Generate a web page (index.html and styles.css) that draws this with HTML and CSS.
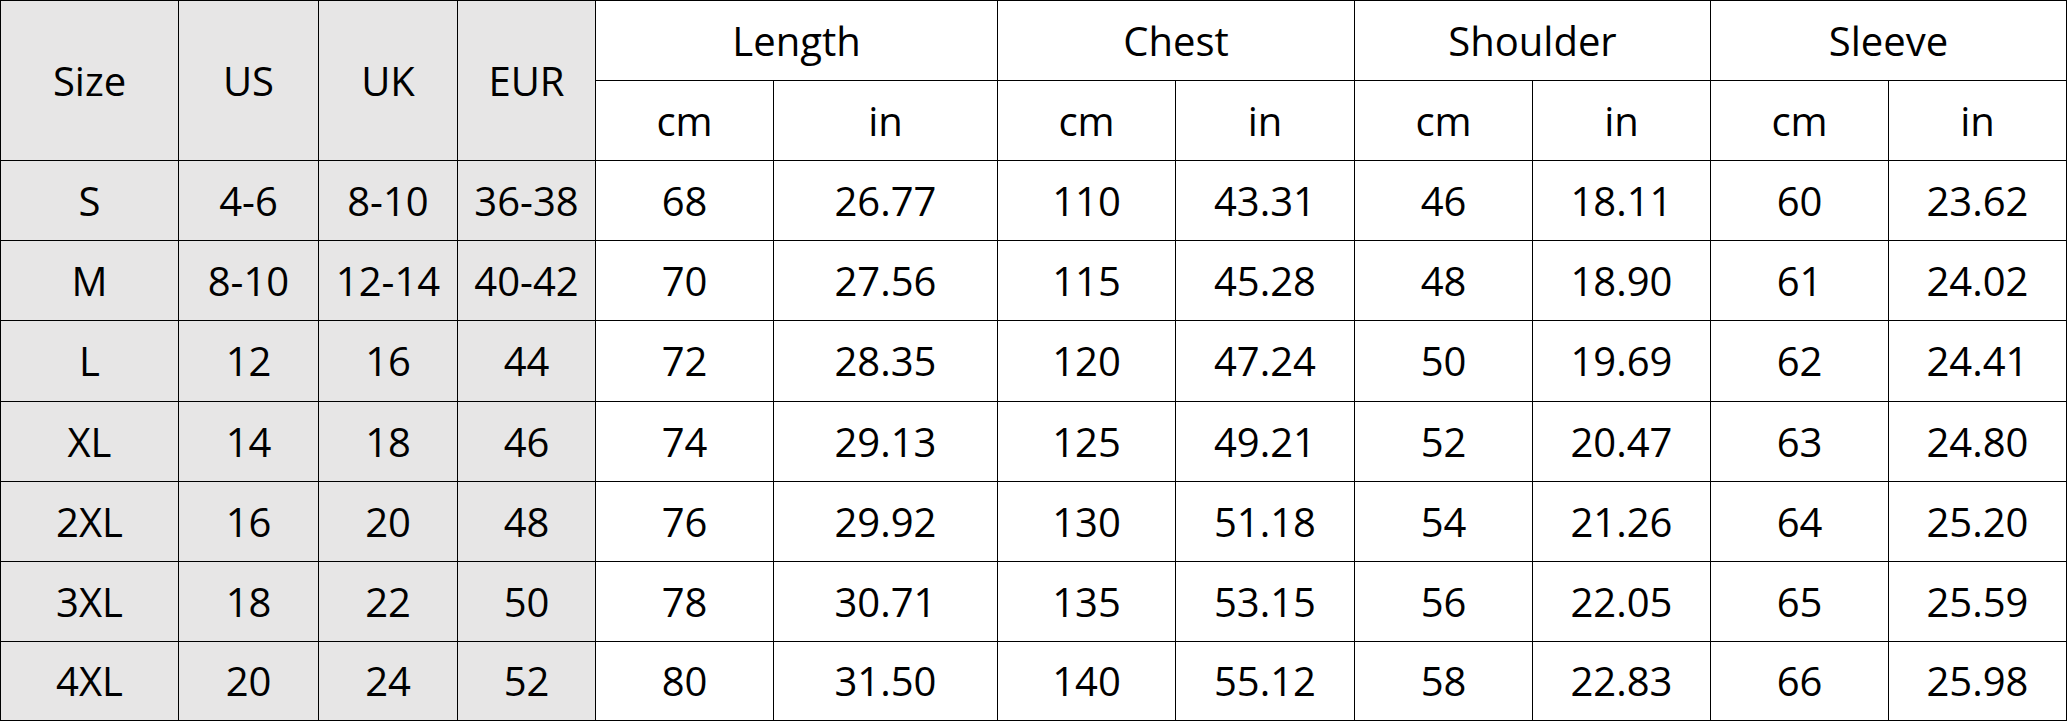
FILE: index.html
```html
<!DOCTYPE html>
<html lang="en">
<head>
<meta charset="utf-8">
<title>Size Chart</title>
<link rel="stylesheet" href="styles.css">
</head>
<body>
<div class="chart">
  <div class="c g tall first top">Size</div>
  <div class="c g tall top">US</div>
  <div class="c g tall top">UK</div>
  <div class="c g tall top">EUR</div>
  <div class="c wide top">Length</div>
  <div class="c wide top">Chest</div>
  <div class="c wide top">Shoulder</div>
  <div class="c wide top">Sleeve</div>
  <div class="c">cm</div><div class="c">in</div>
  <div class="c">cm</div><div class="c">in</div>
  <div class="c">cm</div><div class="c">in</div>
  <div class="c">cm</div><div class="c">in</div>

  <div class="c g first">S</div><div class="c g">4-6</div><div class="c g">8-10</div><div class="c g">36-38</div>
  <div class="c">68</div><div class="c">26.77</div><div class="c">110</div><div class="c">43.31</div><div class="c">46</div><div class="c">18.11</div><div class="c">60</div><div class="c">23.62</div>

  <div class="c g first">M</div><div class="c g">8-10</div><div class="c g">12-14</div><div class="c g">40-42</div>
  <div class="c">70</div><div class="c">27.56</div><div class="c">115</div><div class="c">45.28</div><div class="c">48</div><div class="c">18.90</div><div class="c">61</div><div class="c">24.02</div>

  <div class="c g first">L</div><div class="c g">12</div><div class="c g">16</div><div class="c g">44</div>
  <div class="c">72</div><div class="c">28.35</div><div class="c">120</div><div class="c">47.24</div><div class="c">50</div><div class="c">19.69</div><div class="c">62</div><div class="c">24.41</div>

  <div class="c g first">XL</div><div class="c g">14</div><div class="c g">18</div><div class="c g">46</div>
  <div class="c">74</div><div class="c">29.13</div><div class="c">125</div><div class="c">49.21</div><div class="c">52</div><div class="c">20.47</div><div class="c">63</div><div class="c">24.80</div>

  <div class="c g first">2XL</div><div class="c g">16</div><div class="c g">20</div><div class="c g">48</div>
  <div class="c">76</div><div class="c">29.92</div><div class="c">130</div><div class="c">51.18</div><div class="c">54</div><div class="c">21.26</div><div class="c">64</div><div class="c">25.20</div>

  <div class="c g first">3XL</div><div class="c g">18</div><div class="c g">22</div><div class="c g">50</div>
  <div class="c">78</div><div class="c">30.71</div><div class="c">135</div><div class="c">53.15</div><div class="c">56</div><div class="c">22.05</div><div class="c">65</div><div class="c">25.59</div>

  <div class="c g first">4XL</div><div class="c g">20</div><div class="c g">24</div><div class="c g">52</div>
  <div class="c">80</div><div class="c">31.50</div><div class="c">140</div><div class="c">55.12</div><div class="c">58</div><div class="c">22.83</div><div class="c">66</div><div class="c">25.98</div>
</div>
</body>
</html>
```

FILE: styles.css
```css
html, body {
  margin: 0;
  padding: 0;
  background: #ffffff;
}

.chart {
  display: grid;
  width: 2067px;
  height: 721px;
  grid-template-columns: 179px 140px 139px 138px 178px 224px 178px 179px 178px 178px 178px 178px;
  grid-template-rows: 81px 80px 80px 80px 81px 80px 80px 80px 79px;
  font-family: "Open Sans", "Noto Sans", sans-serif;
  font-size: 40px;
  color: #000000;
}

.c {
  box-sizing: border-box;
  display: flex;
  align-items: center;
  justify-content: center;
  border-right: 1px solid #000000;
  border-bottom: 1px solid #000000;
  background: #ffffff;
  line-height: 1;
  white-space: nowrap;
}

.g {
  background: #e7e6e6;
}

.first {
  border-left: 1px solid #000000;
}

.top {
  border-top: 1px solid #000000;
}

.tall {
  grid-row: span 2;
}

.wide {
  grid-column: span 2;
}
```
